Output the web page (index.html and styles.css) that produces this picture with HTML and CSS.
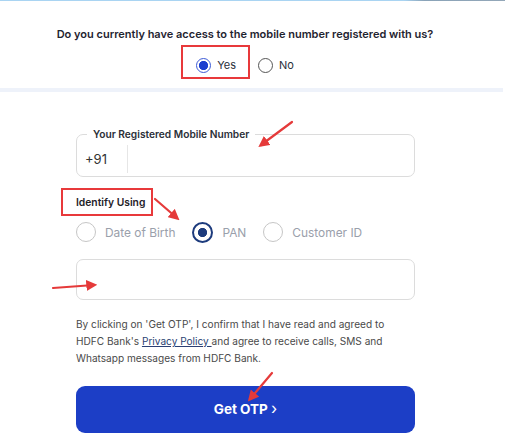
FILE: index.html
```html
<!DOCTYPE html>
<html lang="en">
<head>
<meta charset="utf-8">
<title>Verify mobile</title>
<link rel="stylesheet" href="styles.css">
</head>
<body>
<div class="page">
  <div class="topline"></div>
  <section class="top">
    <p class="question">Do you currently have access to the mobile number registered with us?</p>
    <div class="choice-row">
      <label class="choice mark mark-yes"><span class="dot dot-on"></span>Yes</label>
      <label class="choice"><span class="dot"></span>No</label>
    </div>
  </section>
  <div class="band"></div>
  <main class="form">
    <fieldset class="field">
      <legend>Your Registered Mobile Number</legend>
      <div class="phone">
        <span class="prefix">+91</span>
        <span class="divider"></span>
      </div>
    </fieldset>
    <div class="identify"><span class="mark mark-id">Identify Using</span></div>
    <div class="options">
      <label class="opt"><span class="ring"></span>Date of Birth</label>
      <label class="opt"><span class="ring ring-on"></span>PAN</label>
      <label class="opt"><span class="ring"></span>Customer ID</label>
    </div>
    <div class="input-box"></div>
    <div class="consent">
      <span class="line">By clicking on 'Get OTP', I confirm that I have read and agreed to</span>
      <span class="line">HDFC Bank's <a href="#" class="link">Privacy Policy&nbsp;</a>and agree to receive calls, SMS and</span>
      <span class="line">Whatsapp messages from HDFC Bank.</span>
    </div>
    <button class="otp" type="button">Get OTP <span class="chev">&#x203A;</span></button>
  </main>
  <svg class="arrows" width="505" height="434" viewBox="0 0 505 434" aria-hidden="true">
    <defs>
      <marker id="head" viewBox="0 0 10 10" refX="7" refY="5" markerWidth="5" markerHeight="5" orient="auto">
        <path d="M0 0 L10 5 L0 10 z" fill="#e53a3a"/>
      </marker>
    </defs>
    <g stroke="#e53a3a" stroke-width="2.2" stroke-linecap="round" marker-end="url(#head)">
      <line x1="292" y1="122" x2="261" y2="145"/>
      <line x1="155" y1="199" x2="177" y2="218"/>
      <line x1="53" y1="288" x2="94" y2="285"/>
      <line x1="272" y1="373" x2="250" y2="399"/>
    </g>
  </svg>
</div>
</body>
</html>
```

FILE: styles.css
```css
* { box-sizing: border-box; }
html, body { margin: 0; padding: 0; background: #fff; }
body {
  font-family: Inter, "Noto Sans", "Liberation Sans", sans-serif;
  color: #222;
  width: 505px;
  height: 434px;
  overflow: hidden;
}
.page { position: relative; width: 505px; height: 434px; }

.topline {
  width: 505px;
  height: 1px;
  background: linear-gradient(90deg, #a9d4f2 0 80%, #8aa3b8 84%, #93a7b8 100%);
}
.top {
  width: 490px;
  height: 87px;
  padding-top: 25px;
}
.question {
  margin: 0;
  text-align: center;
  font-size: 11px;
  line-height: 16px;
  font-weight: 600;
  color: #1f2430;
}
.choice-row {
  margin-top: 9px;
  height: 28px;
  display: flex;
  justify-content: center;
  align-items: center;
  gap: 22px;
}
.choice {
  display: flex;
  align-items: center;
  gap: 6px;
  font-size: 11px;
  color: #2a2f3a;
}
.dot {
  width: 15px;
  height: 15px;
  border-radius: 50%;
  border: 1.2px solid #555;
  background: #fff;
}
.dot-on {
  border: 1.5px solid #3d5bd6;
  background: radial-gradient(circle, #1d3fcf 0 4.3px, #fff 4.9px);
}
.mark { position: relative; }
.mark::after {
  content: "";
  position: absolute;
  border: 2px solid #e8393b;
}
.mark-yes::after { left: -15px; right: -14px; top: -13px; bottom: -6px; }
.band { width: 503px; height: 4px; background: #eef2fa; }

.form { width: 339px; margin-left: 76px; }
.field {
  margin: 35px 0 0;
  padding: 0;
  min-width: 0;
  border: 1px solid #dcdcdc;
  border-radius: 7px;
}
.field legend {
  margin-left: 10px;
  padding: 0 6px;
  font-size: 10.2px;
  line-height: 14px;
  font-weight: 600;
  color: #2b2f38;
}
.phone { height: 35px; display: flex; align-items: center; }
.prefix { width: 50px; padding-left: 8px; font-size: 13px; color: #333; }
.divider { width: 1px; height: 28px; background: #e6e6e6; }

.identify { margin-top: 12px; height: 27px; display: flex; align-items: center; }
.mark-id { font-size: 10.3px; line-height: 15px; font-weight: 600; color: #1f2228; }
.mark-id::after { left: -15px; right: -8px; top: -7px; bottom: -6px; }

.options { margin-top: 5px; height: 22px; display: flex; align-items: center; }
.opt {
  display: flex;
  align-items: center;
  gap: 9px;
  font-size: 11.9px;
  color: #9aa0ab;
  margin-right: 17px;
}
.ring {
  width: 20px;
  height: 20px;
  border-radius: 50%;
  border: 1.5px solid #c6c6c6;
  background: #fff;
}
.ring-on {
  width: 21px;
  height: 21px;
  border: 2.5px solid #1d3b7d;
  background: radial-gradient(circle, #1d3b7d 0 4.3px, #fff 4.9px);
}

.input-box {
  margin-top: 16px;
  height: 41px;
  border: 1px solid #dcdcdc;
  border-radius: 7px;
}
.consent {
  margin-top: 16px;
  font-size: 10.1px;
  line-height: 17px;
  color: #4a4a4a;
}
.line { display: block; white-space: nowrap; }
.link { color: #2b3f73; text-decoration: underline; }
.otp {
  display: block;
  width: 339px;
  height: 47px;
  margin-top: 19px;
  border: 0;
  border-radius: 9px;
  background: #1c3ec6;
  color: #fff;
  font-family: inherit;
  font-size: 13.5px;
  line-height: 18px;
  font-weight: 700;
  padding: 0 0 2px;
}
.chev { font-weight: 400; font-size: 16px; }
.arrows { position: absolute; left: 0; top: 0; pointer-events: none; }
```
